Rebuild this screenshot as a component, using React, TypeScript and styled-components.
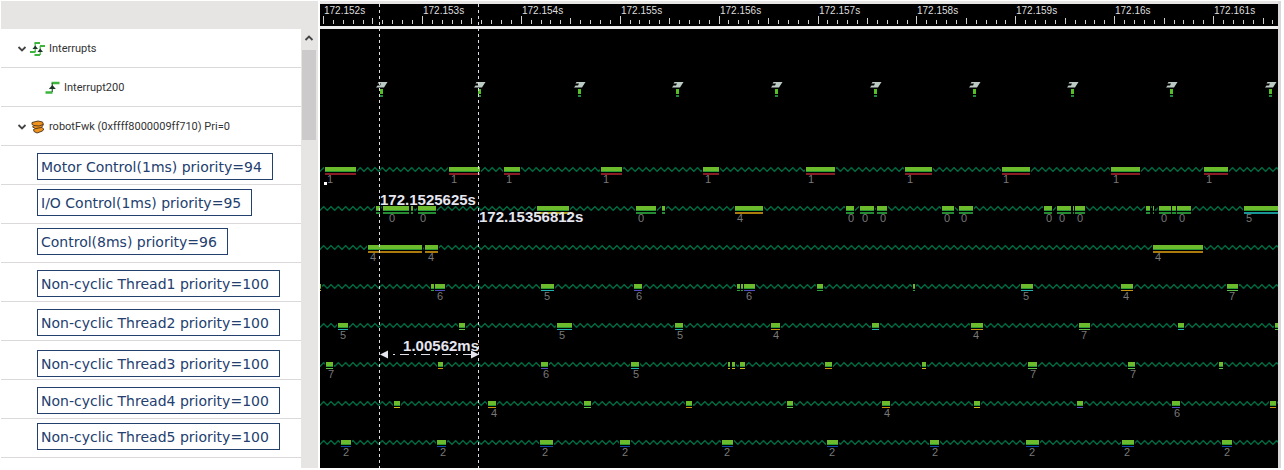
import React from "react";
import styled, { createGlobalStyle } from "styled-components";

const GlobalStyle = createGlobalStyle`
  * { box-sizing: border-box; }
  body { margin: 0; background: #fff; font-family: Roboto, sans-serif; }
`;

const RED = "#a3202a";
const GREEN = "#2aa33c";
const LIME = "#5fc04a";
const YELLOW = "#d0bc1e";
const ORANGE = "#c9920f";
const CYAN = "#1fb0b2";
const PURPLE = "#524dc0";
const BLUE = "#1245a8";

/* ---------- layout ---------- */

const Window = styled.main`
  display: flex;
  min-height: 100vh;
  padding: 1px 3px 2px 1px;
  background: #fff;
`;

const Sidebar = styled.section`
  display: flex;
  flex-direction: column;
  flex: none;
  width: 317px;
  background: #e6e5e4;
`;

const SidebarHeader = styled.div`
  height: 28px;
  flex: none;
`;

const SidebarBody = styled.div`
  display: flex;
  flex: 1;
`;

const Tree = styled.ul`
  flex: 1;
  margin: 0;
  padding: 0;
  list-style: none;
  background: #fff;
`;

const TreeRow = styled.li<{ $indent: number }>`
  display: flex;
  align-items: center;
  height: 39px;
  padding-top: 2px;
  padding-left: ${(p) => p.$indent}px;
  border-bottom: 1px solid #dbd9d9;
`;

type Align = "flex-start" | "center" | "flex-end";

const ThreadRow = styled(TreeRow)<{ $align: Align }>`
  align-items: ${(p) => p.$align};
  padding-top: 4px;
  padding-bottom: 2px;
`;

const Toggle = styled.button`
  display: flex;
  align-items: center;
  width: 14px;
  height: 16px;
  padding: 0 0 0 1px;
  border: 0;
  background: none;
`;

const TreeLabel = styled.span`
  padding-left: 3px;
  font-size: 11px;
  line-height: 16px;
  color: #333;
  white-space: nowrap;
`;

const ThreadTag = styled.span`
  height: 27px;
  padding: 0 10px 0 3px;
  border: 1px solid #23406f;
  background: #fff;
  color: #23406f;
  font-family: "DejaVu Sans", sans-serif;
  font-size: 14px;
  line-height: 26px;
  white-space: nowrap;
`;

const Scrollbar = styled.div`
  display: flex;
  flex-direction: column;
  flex: none;
  width: 16px;
  padding-right: 2px;
  margin-left: 1px;
`;

const ScrollUp = styled.button`
  display: flex;
  align-items: center;
  justify-content: center;
  height: 21px;
  padding: 0 0 4px;
  border: 0;
  background: none;
`;

const ScrollThumb = styled.div`
  height: 90px;
  background: #cccaca;
`;

const Timeline = styled.section`
  position: relative;
  display: flex;
  flex-direction: column;
  flex: 1;
  min-width: 0;
  margin-left: 2px;
  padding-top: 3px;
  border-right: 3px solid #d9d7d8;
  background: #e6e5e4;
  overflow: hidden;
`;

const Ruler = styled.svg`
  display: block;
  flex: none;
  width: 100%;
  height: 22px;
  background: #000;
`;

const Lanes = styled.div`
  flex: 1;
  border-top: 3px solid #eee;
  background: #000;
`;

const Lane = styled.svg`
  display: block;
  width: 100%;
  height: 39px;
`;

const CursorLayer = styled.svg`
  position: absolute;
  inset: 3px 0 0 0;
  width: 100%;
  height: calc(100% - 3px);
  pointer-events: none;
`;

const RulerText = styled.text`
  font-family: "Liberation Sans", sans-serif;
  font-size: 10px;
  fill: #dedede;
`;

const CoreText = styled.text`
  font-family: "Liberation Sans", sans-serif;
  font-size: 11px;
  fill: #787878;
`;

const CursorText = styled.text`
  font-family: "Liberation Sans", sans-serif;
  font-size: 15px;
  font-weight: bold;
  fill: #e6e6f0;
`;

/* ---------- icons ---------- */

const Chevron = ({ up = false }: { up?: boolean }) => (
  <svg width="10" height="8" viewBox="0 0 10 8" aria-hidden="true">
    <path
      d={up ? "M1.5 6 5 2.5 8.5 6" : "M1.5 2 5 5.5 8.5 2"}
      fill="none"
      stroke="#444"
      strokeWidth="1.8"
    />
  </svg>
);

const InterruptGroupIcon = () => (
  <svg width="16" height="16" viewBox="0 0 16 16" aria-hidden="true">
    <g fill="none" stroke="#3db53d" strokeWidth="2">
      <path d="M4.500 2H10M0 11H5.500M10 5H15M4.500 14H10" />
      <path d="M5.200 2v9M10.200 5v9" strokeWidth="1.200" />
    </g>
    <path d="M2.500 8 5.200 4.500 8 8ZM7.500 11l2.700-3.500 2.800 3.500Z" fill="#20352a" />
  </svg>
);

const InterruptIcon = () => (
  <svg width="16" height="16" viewBox="0 0 16 16" aria-hidden="true">
    <path d="M6.500 3h8M0.500 12.500h7" stroke="#3db53d" strokeWidth="2.600" />
    <path d="M7.300 3v9" stroke="#3b6b45" strokeWidth="1.300" />
    <path d="M3.800 9 7.300 5 10.800 9Z" fill="#20352a" />
  </svg>
);

const ProcessIcon = () => (
  <svg width="16" height="16" viewBox="0 0 16 16" aria-hidden="true">
    <g fill="#f0921e" stroke="#4a3418" strokeWidth="0.900" strokeLinejoin="round">
      <path d="M3.500 10.500 10.500 7.500 13.800 10 12.500 12 7 14 4 12.500Z" />
      <path d="M2 3.500 8 2 12.500 3 13.500 5.500 11.500 8.500 5.500 9.500 2.500 8 4 6.500 2 5.500Z" />
    </g>
    <path d="M4 6.500 9 7 13 5.500" fill="none" stroke="#4a3418" strokeWidth="0.900" />
  </svg>
);

/* ---------- trace data ---------- */

const ORIGIN = 320;

type Slice = [start: number, end: number, color: string, core?: string, coreX?: number];

const LANES: { id: string; thick?: boolean; slices: Slice[] }[] = [
  {
    id: "motor",
    thick: true,
    slices: [
      [325, 356, RED, "1", 327], [449, 480, RED, "1", 451], [504, 520, RED, "1", 506],
      [601, 622, RED, "1", 603], [703, 719, RED, "1", 705], [806, 835, RED, "1", 808],
      [905, 932, RED, "1", 907], [1002, 1030, RED, "1", 1003], [1111, 1140, RED, "1", 1113],
      [1204, 1228, RED, "1", 1206],
    ],
  },
  {
    id: "io",
    thick: true,
    slices: [
      [376, 380, GREEN], [383, 409, GREEN, "0", 389], [411, 413, GREEN],
      [418, 436, GREEN, "0", 420], [537, 569, YELLOW], [636, 656, GREEN, "0", 638],
      [662, 665, GREEN], [735, 763, ORANGE, "4", 737], [846, 854, GREEN, "0", 848],
      [860, 874, GREEN, "0", 862], [877, 887, GREEN, "0", 880], [942, 954, GREEN, "0", 944],
      [959, 973, GREEN, "0", 961], [1044, 1052, GREEN, "0", 1046], [1057, 1071, GREEN, "0", 1059],
      [1073, 1074, GREEN], [1075, 1085, GREEN, "0", 1077], [1146, 1150, GREEN],
      [1153, 1154, GREEN], [1159, 1171, GREEN, "0", 1161], [1172, 1176, GREEN],
      [1177, 1191, GREEN, "0", 1179], [1244, 1278, CYAN, "5", 1246],
    ],
  },
  {
    id: "control",
    thick: true,
    slices: [
      [368, 422, ORANGE, "4", 370], [425, 438, ORANGE, "4", 428], [1153, 1203, ORANGE, "4", 1155],
    ],
  },
  {
    id: "thread1",
    slices: [
      [319, 321, YELLOW], [431, 434, GREEN], [435, 445, PURPLE, "6", 437],
      [541, 554, CYAN, "5", 544], [634, 642, PURPLE, "6", 636], [737, 740, GREEN],
      [741, 743, GREEN], [744, 755, PURPLE, "6", 746], [817, 823, GREEN], [913, 915, GREEN],
      [1021, 1033, CYAN, "5", 1023], [1121, 1133, ORANGE, "4", 1123], [1227, 1238, LIME, "7", 1229],
    ],
  },
  {
    id: "thread2",
    slices: [
      [338, 348, CYAN, "5", 340], [459, 465, LIME], [557, 572, CYAN, "5", 559],
      [675, 683, CYAN, "5", 677], [771, 780, ORANGE, "4", 773], [872, 879, CYAN],
      [971, 983, ORANGE, "4", 973], [1079, 1090, LIME, "7", 1081], [1178, 1184, CYAN],
      [1275, 1278, LIME],
    ],
  },
  {
    id: "thread3",
    slices: [
      [326, 333, LIME, "7", 328], [438, 443, ORANGE], [541, 548, PURPLE, "6", 543],
      [631, 639, CYAN, "5", 633], [728, 730, YELLOW], [732, 735, YELLOW], [740, 745, YELLOW],
      [825, 832, ORANGE], [922, 926, YELLOW], [1028, 1037, LIME, "7", 1030],
      [1128, 1135, LIME, "7", 1130], [1219, 1223, LIME],
    ],
  },
  {
    id: "thread4",
    slices: [
      [394, 400, YELLOW], [488, 496, ORANGE, "4", 491], [584, 591, LIME], [686, 692, ORANGE],
      [787, 793, LIME], [882, 890, ORANGE, "4", 884], [974, 980, YELLOW], [1077, 1083, PURPLE],
      [1172, 1180, PURPLE, "6", 1174], [1270, 1276, ORANGE],
    ],
  },
  {
    id: "thread5",
    slices: [
      [341, 351, BLUE, "2", 343], [437, 446, BLUE, "2", 440], [540, 553, BLUE, "2", 542],
      [620, 630, BLUE, "2", 622], [722, 733, BLUE, "2", 724], [827, 838, BLUE, "2", 829],
      [930, 939, BLUE, "2", 932], [1026, 1039, BLUE, "2", 1029], [1122, 1134, BLUE, "2", 1124],
      [1222, 1232, BLUE, "2", 1224],
    ],
  },
];

const INTERRUPTS = [381, 479, 579, 677, 776, 875, 974, 1072, 1171, 1270];

const TICKS = [
  "172.152s", "172.153s", "172.154s", "172.155s", "172.156s",
  "172.157s", "172.158s", "172.159s", "172.16s", "172.161s",
];
const MS = 98.9;
const TICK_START = 323 - ORIGIN;

const THREADS: { name: string; align: Align }[] = [
  { name: "Motor Control(1ms) priority=94", align: "center" },
  { name: "I/O Control(1ms) priority=95", align: "flex-start" },
  { name: "Control(8ms) priority=96", align: "flex-start" },
  { name: "Non-cyclic Thread1 priority=100", align: "center" },
  { name: "Non-cyclic Thread2 priority=100", align: "center" },
  { name: "Non-cyclic Thread3 priority=100", align: "flex-end" },
  { name: "Non-cyclic Thread4 priority=100", align: "center" },
  { name: "Non-cyclic Thread5 priority=100", align: "flex-start" },
];

/* ---------- timeline parts ---------- */

function TimeRuler() {
  const minor = Array.from({ length: 97 }, (_, i) => i);
  return (
    <Ruler role="img" aria-label="Time scale">
      {minor.map((i) => {
        const h = i % 10 === 0 ? 8 : i % 5 === 0 ? 6 : 4;
        return (
          <rect
            key={i}
            x={Math.round(TICK_START + (i * MS) / 10)}
            y={20 - h}
            width="1"
            height={h}
            fill="#cfcfcf"
          />
        );
      })}
      {TICKS.map((t, i) => (
        <RulerText key={t} x={Math.round(TICK_START + i * MS) + 1} y="10">
          {t}
        </RulerText>
      ))}
    </Ruler>
  );
}

function InterruptLane() {
  return (
    <Lane role="img" aria-label="Interrupt200 events">
      {INTERRUPTS.map((x) => (
        <g key={x} transform={`translate(${x - ORIGIN} 0)`}>
          <path d="M-2.500 14H6.500L3 19.500H-5L-3.500 17.500H-1L0 15.500H-3.500Z" fill="#bccac4" />
          <rect x="-1" y="21" width="3" height="5" fill="#55c026" />
          <rect x="-1" y="27" width="3" height="2" fill="#1f8a3a" />
        </g>
      ))}
    </Lane>
  );
}

function TraceLane({ id, thick, slices }: (typeof LANES)[number]) {
  return (
    <Lane role="img" aria-label={id}>
      <defs>
        <pattern id={`wave-${id}`} width="7.330" height="39" patternUnits="userSpaceOnUse">
          <path
            d="M-1 24.300 0 25.300 3.665 21.500 7.330 25.300 8.330 24.300"
            fill="none"
            stroke="#007a4a"
            strokeWidth="1.200"
          />
        </pattern>
      </defs>
      <rect width="100%" height="39" fill={`url(#wave-${id})`} />
      {slices.map(([start, end, color, core, coreX]) => {
        const x = start - ORIGIN;
        const w = end - start;
        return (
          <g key={start}>
            <rect x={x - 1} y="20" width={w + 2} height="7" fill="#000" />
            <rect x={x} y="21" width={w} height="5" fill="#2a9a35" />
            <rect x={x} y="21" width={w} height="4" fill="#6cbb2c" />
            <rect x={x} y="27" width={w} height={thick ? 2 : 1} fill={color} opacity={thick ? 0.85 : 1} />
            {core && coreX && (
              <CoreText x={coreX - ORIGIN} y="37">
                {core}
              </CoreText>
            )}
          </g>
        );
      })}
      {id === "motor" && <rect x={324 - ORIGIN} y="36" width="3" height="3" fill="#fff" />}
    </Lane>
  );
}

function Cursors() {
  const a = 380 - ORIGIN;
  const b = 479 - ORIGIN;
  return (
    <CursorLayer role="img" aria-label="Measurement cursors">
      <g stroke="#dcdce2" strokeWidth="1" strokeDasharray="3 3">
        <line x1={a - 0.5} y1="0" x2={a - 0.5} y2="100%" />
        <line x1={b - 0.5} y1="0" x2={b - 0.5} y2="100%" />
      </g>
      <line
        x1={a + 8}
        y1="350.500"
        x2={b - 8}
        y2="350.500"
        stroke="#e0e0ea"
        strokeDasharray="9 5 2 5"
        strokeDashoffset="9"
      />
      <path d={`M${a} 350.500l8-4v8ZM${b} 350.500l-8-4v8Z`} fill="#e6e6f0" />
      <CursorText x={a} y="201">172.1525625s</CursorText>
      <CursorText x={b} y="218">172.15356812s</CursorText>
      <CursorText x={b} y="347" textAnchor="end">1.00562ms</CursorText>
    </CursorLayer>
  );
}

export default function App() {
  return (
    <>
      <GlobalStyle />
      <Window>
        <Sidebar aria-label="Threads">
          <SidebarHeader />
          <SidebarBody>
            <Tree>
              <TreeRow $indent={15}>
                <Toggle aria-label="Collapse Interrupts"><Chevron /></Toggle>
                <InterruptGroupIcon />
                <TreeLabel>Interrupts</TreeLabel>
              </TreeRow>
              <TreeRow $indent={44}>
                <InterruptIcon />
                <TreeLabel>Interrupt200</TreeLabel>
              </TreeRow>
              <TreeRow $indent={15}>
                <Toggle aria-label="Collapse robotFwk"><Chevron /></Toggle>
                <ProcessIcon />
                <TreeLabel>robotFwk (0xffff8000009ff710) Pri=0</TreeLabel>
              </TreeRow>
              {THREADS.map((t) => (
                <ThreadRow key={t.name} $indent={36} $align={t.align}>
                  <ThreadTag>{t.name}</ThreadTag>
                </ThreadRow>
              ))}
            </Tree>
            <Scrollbar>
              <ScrollUp aria-label="Scroll up"><Chevron up /></ScrollUp>
              <ScrollThumb />
            </Scrollbar>
          </SidebarBody>
        </Sidebar>
        <Timeline aria-label="Timeline">
          <TimeRuler />
          <Lanes>
            <Lane aria-hidden="true" />
            <InterruptLane />
            <Lane aria-hidden="true" />
            {LANES.map((lane) => (
              <TraceLane key={lane.id} {...lane} />
            ))}
          </Lanes>
          <Cursors />
        </Timeline>
      </Window>
    </>
  );
}
